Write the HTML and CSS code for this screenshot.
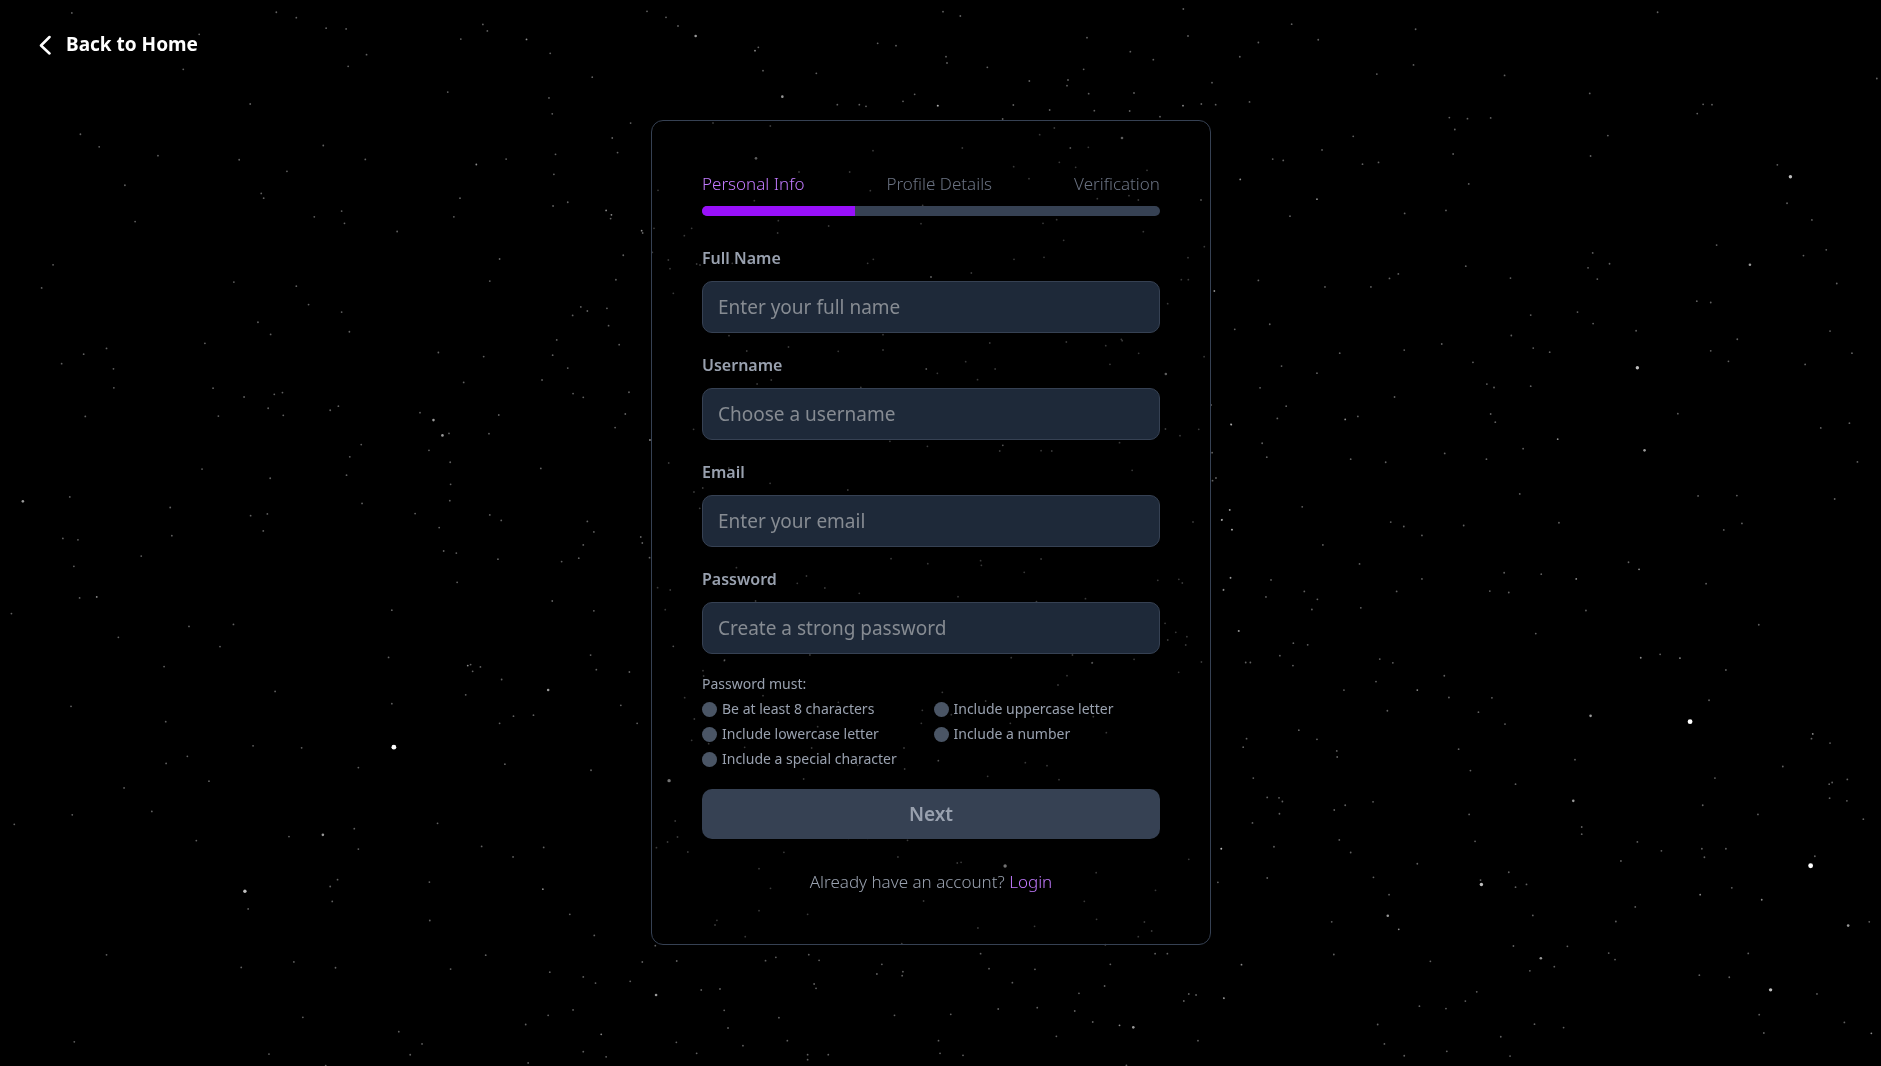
FILE: index.html
```html
<!DOCTYPE html>
<html lang="en">
<head>
<meta charset="utf-8">
<meta name="viewport" content="width=device-width, initial-scale=1">
<title>Sign up</title>
<link rel="stylesheet" href="styles.css">
</head>
<body>
<canvas class="sky" aria-hidden="true"></canvas>
<div class="page">
  <header class="topbar">
    <a class="back" href="#">
      <svg class="back-icon" viewBox="0 0 12 20" fill="none" stroke="currentColor" stroke-width="2.5" stroke-linecap="round" stroke-linejoin="round" aria-hidden="true"><path d="M10.5 2 2 10.5l8.500 8"/></svg>
      <span>Back to Home</span>
    </a>
  </header>
  <main class="content">
    <form class="card">
      <ol class="steps">
        <li class="step step-active">Personal Info</li>
        <li class="step">Profile Details</li>
        <li class="step">Verification</li>
      </ol>
      <div class="progress"><div class="progress-fill"></div></div>
      <div class="fields">
        <div class="field">
          <label for="name">Full Name</label>
          <input id="name" type="text" placeholder="Enter your full name">
        </div>
        <div class="field">
          <label for="username">Username</label>
          <input id="username" type="text" placeholder="Choose a username">
        </div>
        <div class="field">
          <label for="email">Email</label>
          <input id="email" type="email" placeholder="Enter your email">
        </div>
        <div class="field">
          <label for="password">Password</label>
          <input id="password" type="password" placeholder="Create a strong password">
        </div>
        <div class="rules">
          <p>Password must:</p>
          <ul>
            <li>Be at least 8 characters</li>
            <li>Include uppercase letter</li>
            <li>Include lowercase letter</li>
            <li>Include a number</li>
            <li>Include a special character</li>
          </ul>
        </div>
        <button class="next" type="submit" disabled>Next</button>
      </div>
      <p class="login">Already have an account? <a href="#">Login</a></p>
    </form>
  </main>
</div>
<script src="stars.js"></script>
</body>
</html>
```
FILE: styles.css
```css
* { box-sizing: border-box; }
body {
  margin: 0;
  background: #000;
  color: #99a1af;
  font-family: "Noto Sans", "Open Sans", sans-serif;
  font-size: 17px;
  line-height: 25px;
}
.sky { position: fixed; inset: 0; z-index: -1; }
.page {
  display: flex;
  flex-direction: column;
  min-height: 100vh;
  padding-right: 19px;
}
.topbar { display: flex; padding: 32px 39px 0; }
.back {
  display: flex;
  align-items: center;
  gap: 15px;
  color: #fff;
  font-size: 19px;
  font-weight: 700;
  text-decoration: none;
}
.back-icon { width: 12px; height: 20px; }
.content {
  display: flex;
  justify-content: center;
  padding: 63px 20px 122px;
}
.card {
  width: 100%;
  max-width: 560px;
  padding: 50px;
  border: 1px solid #364153;
  border-radius: 12px;
  background: rgba(0, 0, 0, 0.4);
}
.steps {
  display: flex;
  justify-content: space-between;
  margin: 0 0 10px;
  padding: 0;
  list-style: none;
  font-weight: 300;
}
.step { color: #6a7282; }
.step-active { color: #c27aff; }
.progress {
  height: 10px;
  margin-bottom: 30px;
  border-radius: 5px;
  background: #364153;
  overflow: hidden;
}
.progress-fill { width: 33.33%; height: 100%; background: #9810fa; }
.fields { display: flex; flex-direction: column; gap: 20px; }
.field { display: flex; flex-direction: column; gap: 10px; }
.field label { font-size: 16px; font-weight: 600; }
.field input {
  width: 100%;
  height: 52px;
  padding: 0 15px;
  border: 1px solid #364153;
  border-radius: 10px;
  background: #1e2939;
  color: #fff;
  font: inherit;
  font-size: 19px;
}
.field input::placeholder { color: #868b92; opacity: 1; }
.rules { font-size: 14px; line-height: 20px; }
.rules p { margin: 0 0 5px; }
.rules ul {
  display: grid;
  grid-template-columns: 1fr 1fr;
  gap: 5px;
  margin: 0;
  padding: 0;
  list-style: none;
}
.rules li { display: flex; align-items: center; gap: 5px; }
.rules li::before {
  content: "";
  width: 15px;
  height: 15px;
  border-radius: 50%;
  background: #4a5565;
}
.next {
  height: 50px;
  border: 0;
  border-radius: 10px;
  background: #364153;
  color: #99a1af;
  font: inherit;
  font-size: 19px;
  font-weight: 600;
}
.login { margin: 30px 0 0; font-weight: 300; text-align: center; }
.login a { color: #c27aff; text-decoration: none; }
```
FILE: stars.js
```js
// Star catalogue. Each region has an origin, a grid scale and "x,y[,brightness]" entries.
const regions = [
  { x: 0, y: 0, sx: 2.45, sy: 2.942, stars: `176,38 677,36 726,52 799,83 848,85 1183,72 1194,91 1290,116,2 1129,115 1348,157 488,101 449,204 898,161 853,195 1451,227 1097,271 613,306 1345,288 1353,335 1545,362 197,395 243,432 387,458 586,470 792,428 895,469 1167,484,2 1240,468 1361,454 1500,406 1513,449 703,504 1357,513 306,545 640,569 646,583 1127,583 837,621 770,638 844,657 1112,638 1355,606 1391,595 1485,619,2 1498,632,2 1496,643 331,652 973,681 130,779 102,847 1224,762 1527,751 573,830 726,842 1200,827 1509,823 756,896 837,918 1423,903 1439,915 1403,928 1487,907 1491,958 632,948 663,984 856,976 502,1010 261,1025 205,1042 151,1070 278,1085 1364,1000 1517,1014 1074,1037 1185,1049 1354,1045 1391,1083 279,1141 522,1142 598,1168 672,1160 692,1155 1136,1125 1328,1118 1404,1158 1429,1169 1541,1154 657,1201 694,1222 535,1224 209,1225 809,1207 829,1195 1029,1214 1062,1236,3 1084,1281,3 1100,1275 1222,1221 1198,1276 1532,1218 1507,1258 885,1308 857,1344 1051,1325 1103,1360 495,1380 662,1407 849,1398 1325,1378 1104,1425 1102,1473 171,1462 56,1475,3 417,1493 887,1481 614,1517 655,1512 1017,1511 1200,1515 1228,1531 1439,1534 1076,1552 1455,1565 645,1562` },
  { x: 0, y: 533, sx: 2.45, sy: 2.942, stars: `154,16 191,20 421,8 346,68 181,98 1087,53 1118,59 1220,77 1376,84 1418,74 1429,35 1120,145 195,191 237,188,2 1353,200 28,237 960,227 1455,229 463,275 572,269 290,307 539,334 402,393 952,366 1447,359 1461,402 1146,390,2 1153,387 1158,407 1177,394 1229,431 1542,409 674,466 1141,476 1343,462,3 174,510 960,502 1521,507 406,555 1258,539 1307,536 1224,560 1561,560 620,626 739,632 965,630,5 459,657 407,678 878,690 1237,680 1448,698 304,750 512,730 177,829 372,819 35,857 868,870 1072,854 708,893 791,888,3 481,905 878,930 1180,922 1332,925 1257,953 827,1020 809,1040 1052,1027 1330,1048,2 600,1054,4 814,1084 608,1106 1053,1140 1396,1122 1456,1184 261,1241 591,1278 720,1262 822,1279 1104,1283 1190,1242 1347,1292 1429,1306 1459,1324 1544,1319 1404,1403 1343,1419 742,1425 1288,1446 977,1467 1473,1475,2 1034,1503 182,1497 659,1533 1005,1535 1429,1526 1485,1541 1294,1559 798,1567` },
  { x: 1220, y: 0, sx: 2.372, sy: 2.942, stars: `1038,36 170,71 464,86 233,117 91,125 47,167 459,191 372,218 675,222 1558,231 877,275 70,300 1146,307 1167,308 1132,334 544,346 587,349 642,347 557,381 316,401 920,399 242,441 553,453 879,459 125,468 150,472 338,483 376,478 48,528,2 590,541 1322,485 1353,520,4 230,586,2 166,636 438,628 536,619 1345,598 1404,647 1178,721 1438,735 1384,752 884,744 924,776 873,788 583,783 895,821 1257,779,3 1463,834 423,806 402,819 689,818 91,825 249,844 358,844 1131,886 1164,890 737,927 848,918 885,952 118,954 35,969 987,973 1447,974 691,987 1227,998 526,1012 437,1030 743,1024 782,1036 1164,1032 1206,1063 284,1039 1499,1039 600,1066 990,1082,4 1388,1072 146,1077 230,1098 633,1130 650,1140 737,1136 95,1141 414,1168 157,1195 642,1218 653,1242 1086,1217 136,1231 327,1225 297,1234,2 26,1248 1425,1259 1493,1245 801,1292,2 100,1304 719,1320 1007,1325,3 533,1334 111,1345 310,1351 393,1360 632,1351 1512,1359 711,1453 1134,1459 1226,1458 1458,1468 195,1491 23,1500 5,1529 405,1536 436,1549 578,1546 804,1538 1238,1540 1195,1559 28,1558` },
  { x: 1220, y: 533, sx: 2.372, sy: 2.942, stars: `479,7 244,35 331,91 479,135 674,117 762,121 969,86 994,107,2 845,135,2 25,131 121,138 8,168 109,188 200,172 419,172 640,171 685,175 1153,149 231,195 218,225 334,220 868,228 44,288 749,296 1278,270 174,324 208,329 142,361 61,381 72,381 173,390 379,371 410,382 998,367,2 1044,357 1091,368,2 1200,403 532,420 370,437 294,462 468,462,2 543,484 645,485 1160,492 397,523 613,527 676,562 879,538,3 1115,555,5 187,580 1406,591,2 1403,605 1447,618 230,607 63,605 55,630 277,641 278,659 566,636 842,667 1335,687 594,699 1174,721 79,721 701,739 1452,734 1445,739 1488,725 1446,780 1487,788 112,778 140,779 148,790 141,826 363,791 297,801 271,815 838,788,3 1145,801 591,828 1276,828 1526,842 77,853 858,865 858,886 283,903 605,907 990,909 128,923 3,929 310,940 1143,929 1200,929 1149,954 1047,935 951,965 468,973 1411,951 1401,979,5 685,998 364,1013 112,1015 618,1021 620,1034,4 727,1034 701,1042 1214,1044 401,1064 1139,1064,2 1285,1079,2 985,1100 398,1126,3 742,1125 939,1143 265,1144 1540,1144 424,1166,2 1490,1155,3 696,1215 824,1216 922,1236 937,1255 1253,1237 270,1240 761,1251,3 499,1260 51,1270,2 793,1276 735,1288 1137,1301 1208,1307 609,1350 1306,1344,4 1416,1356 9,1368 582,1377 473,1392 536,1399 1279,1417 374,1446 746,1445 815,1455 1481,1440 1290,1471 1545,1472,2 666,1482 390,1503 538,1525 437,1538 688,1539` },
  { x: 640, y: 0, sx: 3, sy: 3, stars: `21,34 78,52 114,78 167,108,3 355,142 345,152,2 369,212 427,290,3 529,220 713,130 768,137 824,283 789,304 592,314 658,314 678,319 893,317,2` },
  { x: 930, y: 0, sx: 3, sy: 3, stars: `39,35 91,48 471,113 601,155 461,208 670,179 774,108 760,27 48,170 51,189 172,202 298,243 414,240 411,257 476,281 612,279 846,248 24,317 250,315 359,330 493,332 599,333 690,350 759,317,2 814,312 857,314 218,357` },
  { x: 640, y: 100, sx: 3, sy: 3, stars: `219,69 391,78 348,175,3 699,152 477,216 629,216 691,272 880,243 54,271 343,302 848,316 415,362 566,378 413,399 843,371 155,385 42,385 133,407 5,392,2 8,399 37,457 85,480 90,506 170,492 180,495 277,490 700,478 683,490 873,531 100,580 267,707 729,704` },
  { x: 920, y: 100, sx: 3, sy: 3, stars: `359,104 403,84 127,144 451,144,2 505,142 606,114,3 281,200 418,187 467,202 681,211 327,236 532,296 627,287 655,300 843,300,2 369,370 410,359 670,395 431,421 853,440 804,473 372,472 282,478 154,519 33,531 784,539 805,539 883,573,2 743,611 604,718` },
  { x: 640, y: 340, sx: 2.613, sy: 3, stars: `279,33 388,21 518,34 635,30 914,9 1114,6 1217,17 1260,2 1303,40 1474,50 851,65 1228,73 748,87,2 777,100 928,87 882,119 1374,102,3 343,120 306,132 577,142 1492,195 1545,254,2 140,268 26,300,2 1373,267 1460,268 1411,287 653,304 751,319 1253,308 948,316,2 940,333 1048,332 1076,333 1495,338 75,369 1286,391 1505,414 1496,422 232,384 340,430 164,444 141,456 543,450 156,505 1541,510 1520,540,2 1445,546 1547,569,2 2,591 6,609 25,653 656,656 752,671 890,662 892,676 1048,657 1004,697 252,683 435,708 411,730 483,744 573,760 831,770 1164,776 302,783 1036,785 1353,721 1408,718 1417,729 1543,714 1525,749 46,743 79,750 66,809 87,919,2 1372,850 1400,877 1429,890 1379,900 1426,915 1565,873 221,960 444,945 970,953 1130,945 1291,958 1182,968 1467,966` },
  { x: 680, y: 660, sx: 3, sy: 3, stars: `133,2 69,32 71,48 1236,9 1161,47 1134,75 1496,37 787,97 14,113 249,107 475,127 240,83 917,123 727,151 814,164 724,190 1240,170 43,177 991,190 1279,218 413,200 35,241 86,251 194,262 395,264 672,264 775,302,2 1036,308 1101,317 533,316 674,327 923,349 371,357 1137,359` },
  { x: 640, y: 780, sx: 2.613, sy: 3, stars: `76,2,4 92,123 98,171 72,186 43,203 125,216 376,217 545,175 595,175 699,181 674,231 829,249 839,247 954,258,4 1192,278 1434,238 1519,206,2 1510,307 1347,331 311,266 341,325 741,363 1161,364 438,403 311,392 201,421 196,435 275,470 883,444 1031,439 1193,418 1318,426 1337,453 1302,470 40,497 6,546 96,543 684,491 1216,494 441,524 355,532 328,542 468,541 632,553 619,582 687,575 685,587 890,521 912,566 1032,568 1229,553 1346,521 1378,521 973,608 455,612 460,625 160,630 209,627 42,645,3 1214,618 1147,640 1434,642 1453,645 1421,663 1526,655 220,691 363,713 665,706 812,703 936,687 1038,683 1136,693 1183,726 1253,736,2 1289,742,3 230,744 1088,769 95,787 269,797 385,782 780,782 1458,782 148,820 438,824 438,839 492,824 784,820 844,826 1271,856` }
];

// Radius and opacity for each brightness level.
const levels = { 1: [0.9, 0.38], 2: [0.9, 0.55], 3: [1.3, 0.6], 4: [1.7, 0.75], 5: [2.4, 1] };
const canvas = document.querySelector('.sky');

function drawSky() {
  canvas.width = window.innerWidth;
  canvas.height = window.innerHeight;
  const ctx = canvas.getContext('2d');
  ctx.fillStyle = '#fff';
  for (const region of regions) {
    for (const entry of region.stars.split(' ')) {
      const [x, y, level = 1] = entry.split(',').map(Number);
      const [radius, alpha] = levels[level];
      ctx.globalAlpha = alpha;
      ctx.beginPath();
      ctx.arc(region.x + x / region.sx, region.y + y / region.sy, radius, 0, Math.PI * 2);
      ctx.fill();
    }
  }
}

window.addEventListener('resize', drawSky);
drawSky();
```
